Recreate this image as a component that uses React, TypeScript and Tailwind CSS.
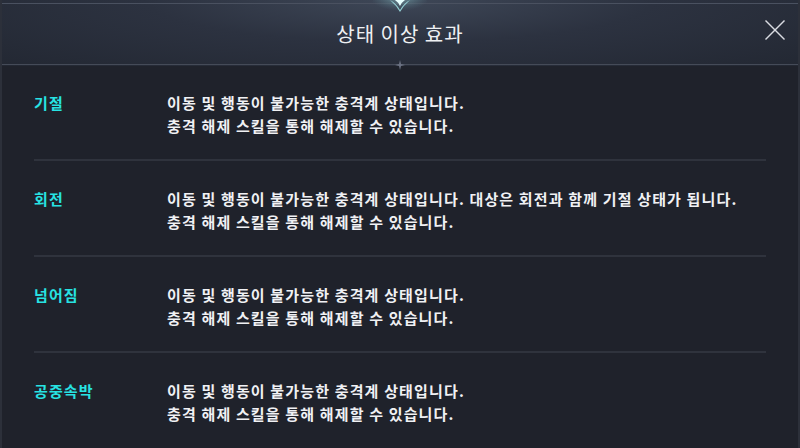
const EFFECTS = [
  { name: "기절", lines: ["이동 및 행동이 불가능한 충격계 상태입니다.", "충격 해제 스킬을 통해 해제할 수 있습니다."] },
  {
    name: "회전",
    lines: ["이동 및 행동이 불가능한 충격계 상태입니다. 대상은 회전과 함께 기절 상태가 됩니다.", "충격 해제 스킬을 통해 해제할 수 있습니다."],
  },
  { name: "넘어짐", lines: ["이동 및 행동이 불가능한 충격계 상태입니다.", "충격 해제 스킬을 통해 해제할 수 있습니다."] },
  { name: "공중속박", lines: ["이동 및 행동이 불가능한 충격계 상태입니다.", "충격 해제 스킬을 통해 해제할 수 있습니다."] },
];

const font = { fontFamily: '"Noto Sans CJK KR", "Noto Sans", sans-serif' };

export default function App() {
  return (
    <div className="w-[800px] h-[448px] overflow-hidden bg-[#1f222b] border-x-2 border-[#2c303a] flex flex-col" style={font}>
      {/* Header */}
      <div className="relative h-[66px] shrink-0 bg-[radial-gradient(ellipse_at_50%_0%,#3e4757_0%,#2c3240_45%,#232833_100%)] flex items-center justify-center">
        <div className="absolute left-0 right-0 top-[3px] h-px bg-[#4a5160]" />
        <div className="absolute left-0 right-0 bottom-[1px] h-px bg-[#454b58]" />
        {/* top ornament */}
        <svg className="absolute left-1/2 -translate-x-1/2 top-0" width="60" height="18" viewBox="0 0 60 18">
          <defs>
            <radialGradient id="glow" cx="50%" cy="20%" r="55%">
              <stop offset="0%" stopColor="#a8e6ea" stopOpacity="0.6" />
              <stop offset="100%" stopColor="#5c8e99" stopOpacity="0" />
            </radialGradient>
          </defs>
          <ellipse cx="30" cy="4" rx="28" ry="14" fill="url(#glow)" />
          <path d="M20 0 Q26 3 30 10 Q34 3 40 0 Q34 5 30 12 Q26 5 20 0Z" fill="#9fdfe2" opacity="0.9" />
          <path d="M25 0 Q28 2 30 6 Q32 2 35 0Z" fill="#e8ffff" />
        </svg>
        {/* bottom diamond */}
        <svg className="absolute left-1/2 -translate-x-1/2 bottom-[-4px]" width="10" height="10" viewBox="0 0 10 10">
          <path d="M5 0 L6 4 L10 5 L6 6 L5 10 L4 6 L0 5 L4 4Z" fill="#6b7283" />
        </svg>
        <h1 className="text-[20px] text-[#eef0f3] tracking-[1px] mt-[1px]">상태 이상 효과</h1>
        <button className="absolute right-[13px] top-[20px]">
          <svg width="20" height="20" viewBox="0 0 20 20" stroke="#d9dce2" strokeWidth="1.4">
            <line x1="0.5" y1="0.5" x2="19.5" y2="19.5" />
            <line x1="19.5" y1="0.5" x2="0.5" y2="19.5" />
          </svg>
        </button>
      </div>

      {/* Body */}
      <div className="flex-1 px-[32px] pt-[25px]">
        {EFFECTS.map((e, i) => (
          <div
            key={e.name}
            className={`flex pb-[22px] ${i > 0 ? "border-t-2 border-[#2f333d] pt-[26px]" : ""}`}
          >
            <div className="w-[133px] shrink-0 text-[15px] font-bold text-[#27e3e3] leading-[23px] tracking-[1.1px]">{e.name}</div>
            <div className="text-[15px] font-bold text-[#f0f1f4] leading-[23px] tracking-[1.15px]">
              {e.lines.map((l) => (
                <div key={l}>{l}</div>
              ))}
            </div>
          </div>
        ))}
      </div>
    </div>
  );
}
